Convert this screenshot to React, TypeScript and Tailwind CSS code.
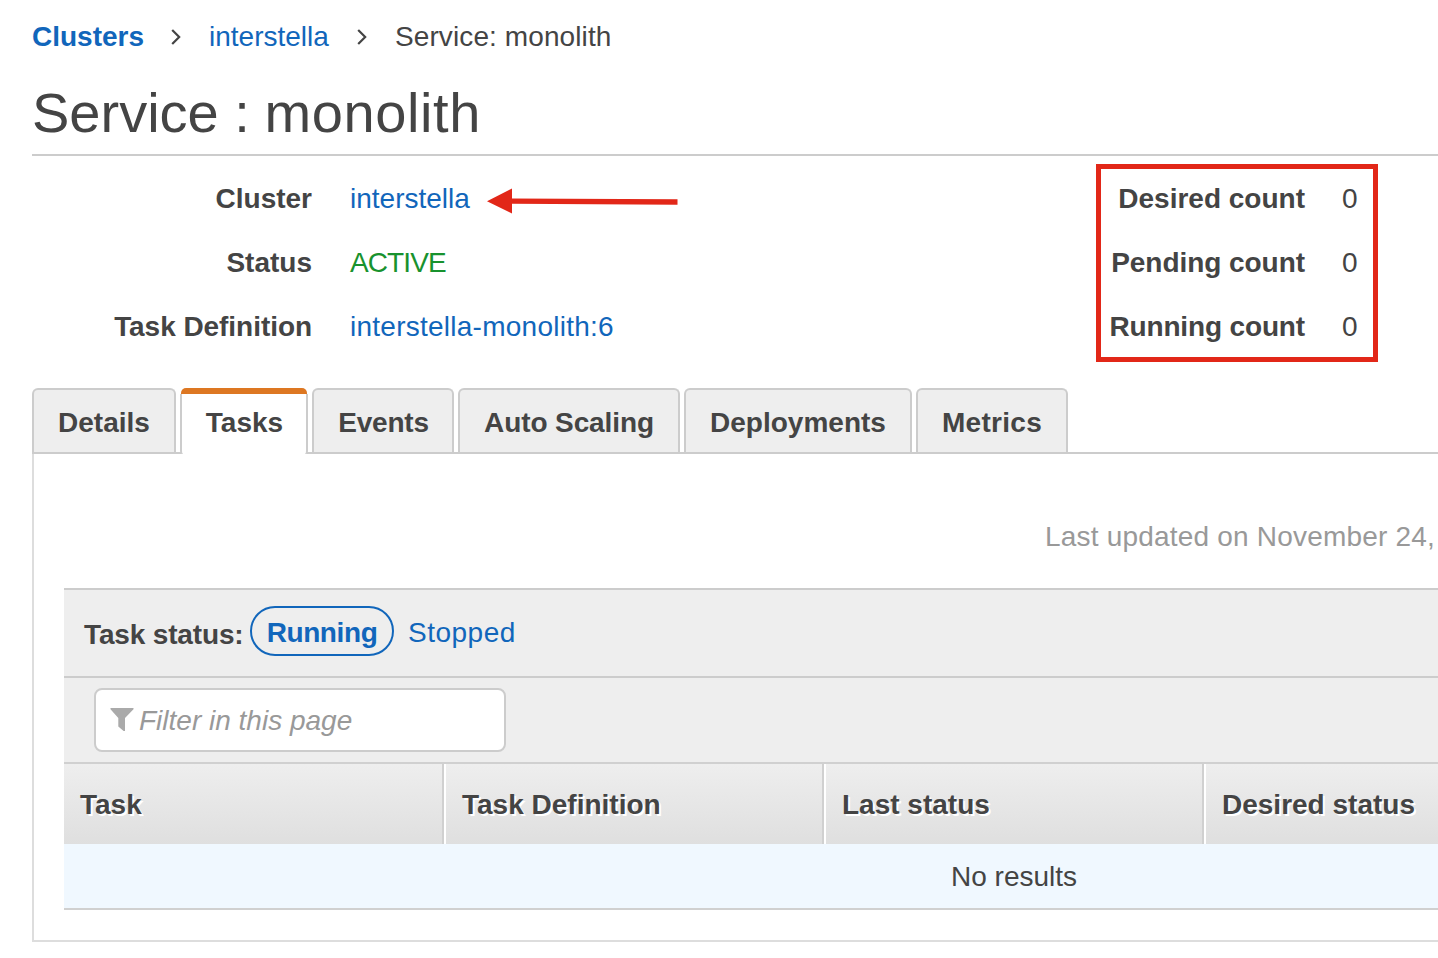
import React from "react";

const tabs = [
  { label: "Details", width: "w-[144px]", tracking: "tracking-[0px]" },
  { label: "Tasks", width: "w-[128px]", tracking: "tracking-[0px]", active: true },
  { label: "Events", width: "w-[142px]", tracking: "pl-[1px] tracking-[-0.2px]" },
  { label: "Auto Scaling", width: "w-[222px]", tracking: "tracking-[-0.1px]" },
  { label: "Deployments", width: "w-[228px]", tracking: "tracking-[0px]" },
  { label: "Metrics", width: "w-[152px]", tracking: "tracking-[0.3px]" },
];

const counts = [
  { label: "Desired count", tracking: "tracking-[0px]" },
  { label: "Pending count", tracking: "tracking-[-0.05px]" },
  { label: "Running count", tracking: "tracking-[-0.15px]" },
];

const columns = [
  { label: "Task", width: "w-[382px]" },
  { label: "Task Definition", width: "w-[380px]" },
  { label: "Last status", width: "w-[380px]" },
  { label: "Desired status", width: "w-[380px]" },
];

function Chevron() {
  return (
    <svg width="12" height="18" viewBox="0 0 12 18" className="shrink-0" fill="none" stroke="#444" strokeWidth="2.2">
      <path d="M2.2 1.9 L9.2 9 L2.2 16.1" />
    </svg>
  );
}

export default function App() {
  return (
    <div className="h-[958px] w-[1438px] overflow-hidden bg-white pl-8 font-['Liberation_Sans',Arial,sans-serif] text-[28px] leading-8 whitespace-nowrap text-[#444]">
      <nav className="flex h-[72px] items-center pt-[2px]">
        <a className="w-[138px] font-bold text-[#1166bb]">Clusters</a>
        <Chevron />
        <a className="ml-[27px] w-[147px] text-[#1166bb]">interstella</a>
        <Chevron />
        <span className="ml-[27px] tracking-[0.1px]">Service: monolith</span>
      </nav>
      <h1 className="h-[84px] border-b-2 border-[#ccc] pt-[9px] text-[56px] leading-[64px]">
        Service : <span className="-ml-[1px] tracking-[0.6px]">monolith</span>
      </h1>

      <section className="flex h-[232px] pt-2">
        <dl className="grid h-[160px] w-[1064px] grid-cols-[280px_1fr] content-start gap-x-[38px] gap-y-8 pt-[19px]">
          <dt className="text-right font-bold">Cluster</dt>
          <dd className="flex items-center text-[#1166bb]">
            <span className="w-[137px]">interstella</span>
            <svg width="192" height="28" viewBox="0 0 192 28" fill="#e22718" className="mt-[4px]">
              <path d="M0 14.2 L25 1.6 V11.6 L190.5 12.2 V17.8 L25 16.8 V26.4 Z" />
            </svg>
          </dd>
          <dt className="text-right font-bold">Status</dt>
          <dd className="tracking-[-0.9px] text-[#18922e]">ACTIVE</dd>
          <dt className="text-right font-bold tracking-[-0.05px]">Task Definition</dt>
          <dd className="tracking-[0.25px] text-[#1166bb]">interstella-monolith:6</dd>
        </dl>
        <dl className="grid h-[198px] w-[282px] grid-cols-[204px_1fr] content-start gap-x-[37px] gap-y-8 border-[5px] border-[#e22718] pt-[14px]">
          {counts.map((count) => (
            <React.Fragment key={count.label}>
              <dt className={`${count.tracking} text-right font-bold`}>{count.label}</dt>
              <dd>0</dd>
            </React.Fragment>
          ))}
        </dl>
      </section>

      <div className="flex h-[66px] gap-1 border-b-2 border-[#ccc]">
        {tabs.map((tab) =>
          tab.active ? (
            <div key={tab.label} className={`${tab.width} flex h-[66px] shrink-0 flex-col text-center font-bold`}>
              <div className="mx-[1px] h-[6px] shrink-0 rounded-t-[5px] bg-[#dd7722]" />
              <div className="h-[60px] rounded-b-[3px] border-x-2 border-[#ccc] bg-white pt-[13px] pl-[1px]">{tab.label}</div>
            </div>
          ) : (
            <div key={tab.label} className={`${tab.width} h-16 shrink-0 rounded-t-[6px] border-2 border-b-0 border-[#ccc] bg-[#eee] pt-[17px] text-center font-bold`}>
              <span className={tab.tracking}>{tab.label}</span>
            </div>
          ),
        )}
      </div>

      <main className="h-[488px] border-b-2 border-l-2 border-[#ddd] pt-[67px] pl-[30px]">
        <p className="h-[67px] pl-[981px] tracking-[0.2px] text-[#999]">Last updated on November 24,</p>
        <div className="flex h-[90px] border-y-2 border-[#ccc] bg-[#eee] pl-5">
          <span className="mt-[29px] w-[166px] font-bold tracking-[-0.15px]">Task status:</span>
          <span className="mt-4 h-[50px] w-[144px] rounded-[25px] border-2 border-[#1166bb] pt-[9px] text-center font-bold tracking-[-0.4px] text-[#1166bb]">Running</span>
          <span className="mt-[27px] ml-[14px] tracking-[0.5px] text-[#1166bb]">Stopped</span>
        </div>
        <div className="h-[86px] border-b-2 border-[#d0d0d0] bg-[#eee] pt-[10px] pl-[30px]">
          <div className="flex h-16 w-[412px] items-center rounded-lg border-2 border-[#ccc] bg-white pl-[14px] text-[#999] italic">
            <svg width="24" height="24" viewBox="0 0 24 24" fill="#aaa">
              <path d="M0.5 0 H23.5 V1.3 L15 9.9 V23 H13.6 L8.3 18.5 V9.9 L0.5 1.3 Z" />
            </svg>
            <span className="mt-[2px] ml-[5px]">Filter in this page</span>
          </div>
        </div>
        <div className="flex h-20">
          {columns.map((column) => (
            <div key={column.label} className={`${column.width} flex shrink-0 border-r-2 border-white`}>
              <div className="w-full border-r-2 border-[#d0d0d0] bg-linear-to-b from-[#eee] to-[#dfdfdf] pt-[25px] pl-4 font-bold text-shadow-[2px_2px_0_#fff]">{column.label}</div>
            </div>
          ))}
        </div>
        <div className="h-[66px] border-b-2 border-[#d0d0d0] bg-[#f0f8ff] pt-[17px] pl-[887px]">No results</div>
      </main>
    </div>
  );
}
